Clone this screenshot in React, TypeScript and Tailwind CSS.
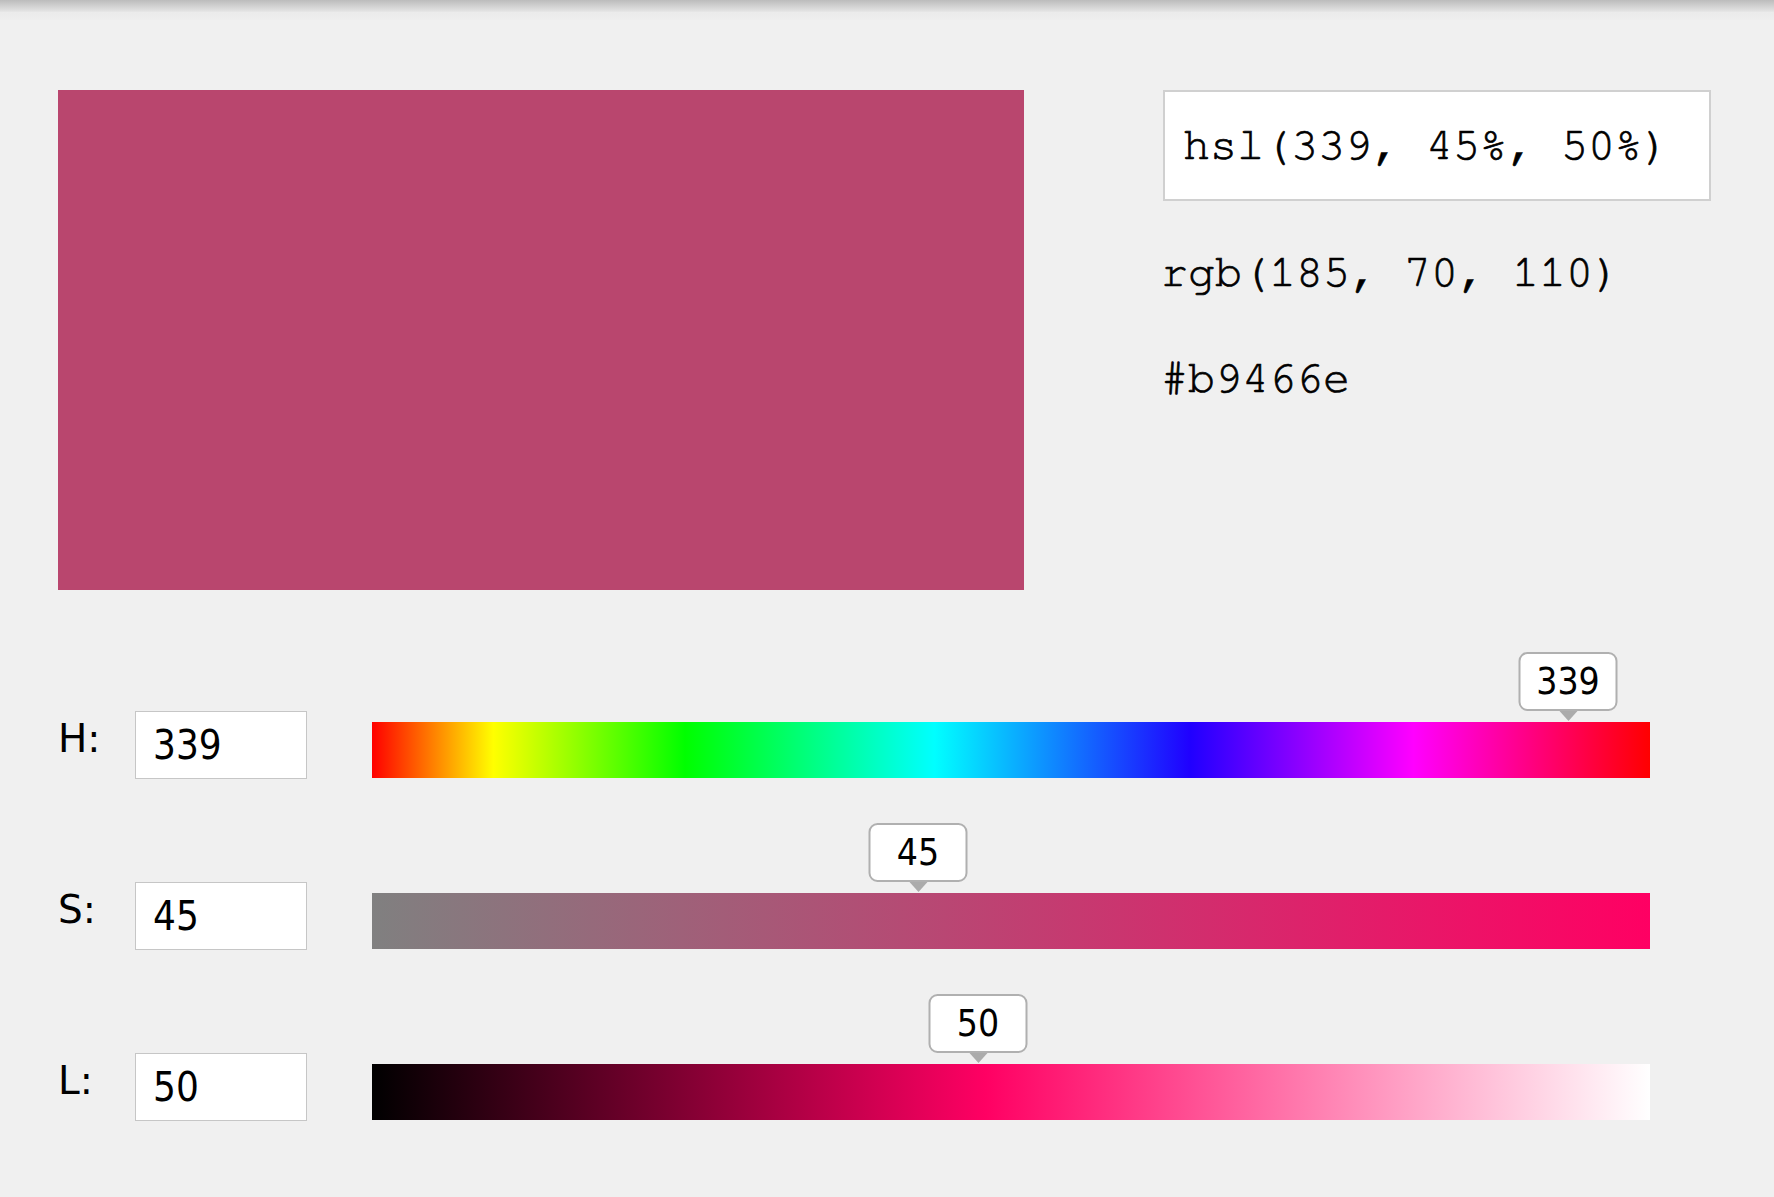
import React from "react";

const mono = {
  fontFamily: "'Nimbus Mono PS', 'Nimbus Mono L', FreeMono, 'Courier New', 'Liberation Mono', monospace",
};
const sans = { fontFamily: "'DejaVu Sans Condensed', 'DejaVu Sans', Verdana, sans-serif" };
const labelFont = { fontFamily: "'DejaVu Sans', Verdana, sans-serif" };

const channels = [
  {
    label: "H",
    value: 339,
    tip: "left-[1196px]",
    track:
      "bg-[linear-gradient(to_right,#ff0000_0%,#ffff00_9.5%,#00ff00_24.5%,#00ffff_44%,#2000ff_64%,#ff00ff_81.5%,#ff0000_100%)]",
  },
  {
    label: "S",
    value: 45,
    tip: "left-[546px]",
    track: "bg-[linear-gradient(to_right,#808080_0%,#ff0063_100%)]",
  },
  {
    label: "L",
    value: 50,
    tip: "left-[606px]",
    track: "bg-[linear-gradient(to_right,#000000_0%,#ff0063_48%,#ffffff_100%)]",
  },
];

function SliderRow({ label, value, tip, track }: (typeof channels)[number]) {
  return (
    <div className="flex items-start h-[68px]">
      <div className="w-[77px] mt-[8px] text-[39px] leading-none text-black" style={labelFont}>
        {label}:
      </div>
      <input
        readOnly
        value={value}
        className="w-[172px] h-[68px] bg-white border border-[#c6c6c6] pl-[17px] text-[40px] leading-none text-black outline-none"
        style={sans}
      />
      <div className={`relative ml-[65px] mt-[11px] w-[1278px] h-[56px] ${track}`}>
        <div className={`absolute bottom-full ${tip} -translate-x-1/2 flex flex-col items-center`}>
          <div
            className="w-[99px] h-[59px] bg-white border-2 border-[#b0b0b0] rounded-[9px] flex items-center justify-center text-[37px] leading-none text-black"
            style={sans}
          >
            {value}
          </div>
          <div className="w-0 h-0 border-x-[9px] border-x-transparent border-t-[10px] border-t-[#ababab] mb-[1px]" />
        </div>
      </div>
    </div>
  );
}

export default function App() {
  return (
    <div className="min-h-screen w-full bg-[#f0f0f0]">
      {/* toolbar shadow */}
      <div className="h-[20px] bg-[linear-gradient(to_bottom,#bcbcbc_0%,#e2e2e2_55%,#ebebeb_62%,#eeeeee_100%)]" />

      <div className="flex pl-[58px] pt-[70px]">
        <div className="w-[966px] h-[500px] bg-[#b9466e]" />

        <div
          className="ml-[139px] flex flex-col text-[45px] leading-none text-black [-webkit-text-stroke:0.7px_#000]"
          style={mono}
        >
          <div className="w-[548px] h-[111px] bg-white border-2 border-[#d0d0d0] flex items-center px-[18px]">
            hsl(339, 45%, 50%)
          </div>
          <div className="mt-[49px] -ml-[2px]">rgb(185, 70, 110)</div>
          <div className="mt-[61px] -ml-[2px]">#b9466e</div>
        </div>
      </div>

      <div className="flex flex-col gap-[103px] pl-[58px] pt-[121px] pb-[60px]">
        {channels.map((c) => (
          <SliderRow key={c.label} {...c} />
        ))}
      </div>
    </div>
  );
}
